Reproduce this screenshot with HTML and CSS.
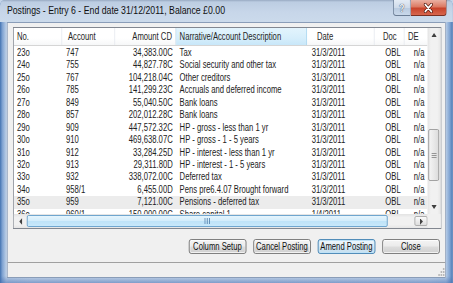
FILE: index.html
```html
<!DOCTYPE html>
<html lang="en">
<head>
<meta charset="utf-8">
<title>Postings</title>
<link rel="stylesheet" href="styles.css">
</head>
<body>
<div class="screen">
<div class="window">
  <div class="titlebar">
    <div class="title">Postings - Entry 6 - End date 31/12/2011, Balance £0.00</div>
    <div class="caption">
      <div class="cap-btn help">?</div>
      <div class="cap-btn close">
        <svg width="16" height="10" viewBox="0 0 16 10"><path d="M4 1.5 L12 8.5 M12 1.5 L4 8.5" stroke="#4a1208" stroke-width="3.6" stroke-linecap="round"/><path d="M4 1.5 L12 8.5 M12 1.5 L4 8.5" stroke="#ffffff" stroke-width="2" stroke-linecap="round"/></svg>
      </div>
    </div>
  </div>
  <div class="client">
    <div class="list">
      <div class="list-top">
        <div class="view">
          <div class="row head">
            <div class="c-no">No.</div>
            <div class="c-acc">Account</div>
            <div class="c-amt">Amount CD</div>
            <div class="c-nar hot">Narrative/Account Description</div>
            <div class="c-date">Date</div>
            <div class="c-doc">Doc</div>
            <div class="c-de">DE</div>
          </div>
          <div class="rows">
            <div class="row"><div class="c-no">23o</div><div class="c-acc">747</div><div class="c-amt">34,383.00C</div><div class="c-nar">Tax</div><div class="c-date">31/3/2011</div><div class="c-doc">OBL</div><div class="c-de">n/a</div></div>
            <div class="row"><div class="c-no">24o</div><div class="c-acc">755</div><div class="c-amt">44,827.78C</div><div class="c-nar">Social security and other tax</div><div class="c-date">31/3/2011</div><div class="c-doc">OBL</div><div class="c-de">n/a</div></div>
            <div class="row"><div class="c-no">25o</div><div class="c-acc">767</div><div class="c-amt">104,218.04C</div><div class="c-nar">Other creditors</div><div class="c-date">31/3/2011</div><div class="c-doc">OBL</div><div class="c-de">n/a</div></div>
            <div class="row"><div class="c-no">26o</div><div class="c-acc">785</div><div class="c-amt">141,299.23C</div><div class="c-nar">Accruals and deferred income</div><div class="c-date">31/3/2011</div><div class="c-doc">OBL</div><div class="c-de">n/a</div></div>
            <div class="row"><div class="c-no">27o</div><div class="c-acc">849</div><div class="c-amt">55,040.50C</div><div class="c-nar">Bank loans</div><div class="c-date">31/3/2011</div><div class="c-doc">OBL</div><div class="c-de">n/a</div></div>
            <div class="row"><div class="c-no">28o</div><div class="c-acc">857</div><div class="c-amt">202,012.28C</div><div class="c-nar">Bank loans</div><div class="c-date">31/3/2011</div><div class="c-doc">OBL</div><div class="c-de">n/a</div></div>
            <div class="row"><div class="c-no">29o</div><div class="c-acc">909</div><div class="c-amt">447,572.32C</div><div class="c-nar">HP - gross - less than 1 yr</div><div class="c-date">31/3/2011</div><div class="c-doc">OBL</div><div class="c-de">n/a</div></div>
            <div class="row"><div class="c-no">30o</div><div class="c-acc">910</div><div class="c-amt">469,638.07C</div><div class="c-nar">HP - gross - 1 - 5 years</div><div class="c-date">31/3/2011</div><div class="c-doc">OBL</div><div class="c-de">n/a</div></div>
            <div class="row"><div class="c-no">31o</div><div class="c-acc">912</div><div class="c-amt">33,284.25D</div><div class="c-nar">HP - interest - less than 1 yr</div><div class="c-date">31/3/2011</div><div class="c-doc">OBL</div><div class="c-de">n/a</div></div>
            <div class="row"><div class="c-no">32o</div><div class="c-acc">913</div><div class="c-amt">29,311.80D</div><div class="c-nar">HP - interest - 1 - 5 years</div><div class="c-date">31/3/2011</div><div class="c-doc">OBL</div><div class="c-de">n/a</div></div>
            <div class="row"><div class="c-no">33o</div><div class="c-acc">932</div><div class="c-amt">338,072.00C</div><div class="c-nar">Deferred tax</div><div class="c-date">31/3/2011</div><div class="c-doc">OBL</div><div class="c-de">n/a</div></div>
            <div class="row"><div class="c-no">34o</div><div class="c-acc">958/1</div><div class="c-amt">6,455.00D</div><div class="c-nar">Pens pre6.4.07 Brought forward</div><div class="c-date">31/3/2011</div><div class="c-doc">OBL</div><div class="c-de">n/a</div></div>
            <div class="row shaded"><div class="c-no">35o</div><div class="c-acc">959</div><div class="c-amt">7,121.00C</div><div class="c-nar">Pensions - deferred tax</div><div class="c-date">31/3/2011</div><div class="c-doc">OBL</div><div class="c-de">n/a</div></div>
            <div class="row"><div class="c-no">36o</div><div class="c-acc">960/1</div><div class="c-amt">150,000.00C</div><div class="c-nar">Share capital 1</div><div class="c-date">1/4/2011</div><div class="c-doc">OBL</div><div class="c-de">n/a</div></div>
          </div>
        </div>
        <div class="vscroll">
          <div class="vbtn"><svg width="7" height="4" viewBox="0 0 7 4"><path d="M0 4 L3.5 0 L7 4 Z" fill="#404040"/></svg></div>
          <div class="vtrack">
            <div class="vthumb"><svg width="7" height="5" viewBox="0 0 7 5"><path d="M0 0.5 H7 M0 2.5 H7 M0 4.5 H7" stroke="#8a8a8a" stroke-width="1"/></svg></div>
          </div>
          <div class="vbtn"><svg width="7" height="4" viewBox="0 0 7 4"><path d="M0 0 L3.5 4 L7 0 Z" fill="#404040"/></svg></div>
        </div>
      </div>
      <div class="hbar">
        <div class="hbtn"><svg width="4" height="7" viewBox="0 0 4 7"><path d="M4 0 L0 3.5 L4 7 Z" fill="#404040"/></svg></div>
        <div class="htrack">
          <div class="hthumb"><svg width="8" height="6" viewBox="0 0 8 6"><path d="M1 0 V6 M4 0 V6 M7 0 V6" stroke="#5a86b0" stroke-width="1.2"/></svg></div>
        </div>
        <div class="hbtn hover"><svg width="4" height="7" viewBox="0 0 4 7"><path d="M0 0 L4 3.5 L0 7 Z" fill="#404040"/></svg></div>
        <div class="corner"></div>
      </div>
    </div>
    <div class="actions">
      <button class="btn">Column Setup</button>
      <button class="btn">Cancel Posting</button>
      <button class="btn default">Amend Posting</button>
      <button class="btn">Close</button>
    </div>
    <div class="status">
      <svg class="grip" width="12" height="10" viewBox="0 0 12 10"><g fill="#b8b8b8"><rect x="9" y="1" width="2" height="2"/><rect x="6" y="4" width="2" height="2"/><rect x="9" y="4" width="2" height="2"/><rect x="3" y="7" width="2" height="2"/><rect x="6" y="7" width="2" height="2"/><rect x="9" y="7" width="2" height="2"/></g></svg>
    </div>
  </div>
</div>
</div>
</body>
</html>
```

FILE: styles.css
```css
* { box-sizing: border-box; }
html, body { margin: 0; padding: 0; overflow: hidden; background: #c4d4e8; }
body { width: 453px; height: 283px; }

.screen {
  width: 453px;
  height: 283px;
  overflow: hidden;
}

/* The dialog is laid out at its natural width and squeezed horizontally,
   matching the narrow proportions of the captured window. */
.window {
  width: 590px;
  height: 283px;
  margin-right: -137px;
  transform: scaleX(0.7676);
  transform-origin: 0 0;
  display: flex;
  flex-direction: column;
  font-family: "Liberation Sans", Arial, sans-serif;
  color: #222;
  border-radius: 6px 6px 0 0;
  background:
    linear-gradient(to bottom, rgba(80,120,180,0) 0, rgba(80,120,180,0) 276px, rgba(70,110,175,.55) 283px),
    linear-gradient(to right, #4373b1 0, #7ea2d1 3px, #b9cde6 8px, #c6d6ea 40px, #c4d5ea 560px, #b5cbe6 581px, #7fa3d2 586px, #4a76b2 590px);
}

.titlebar {
  height: 22px;
  display: flex;
  align-items: flex-start;
  background: linear-gradient(to bottom, #98aac2 0, #bccde2 2px, #c7d6e9 12px, #cbdaeb 22px);
  border-radius: 6px 6px 0 0;
}
.title {
  padding: 3px 0 0 9px;
  font-size: 11.4px;
  line-height: 14px;
  color: #101010;
  white-space: nowrap;
}
.caption {
  display: flex;
  margin-left: auto;
  margin-right: 8px;
}
.cap-btn {
  height: 16px;
  display: flex;
  align-items: center;
  justify-content: center;
}
.help {
  width: 23px;
  border: 1px solid #6b7d95;
  border-top: none;
  border-radius: 0 0 0 4px;
  background: linear-gradient(to bottom, #e4ecf5 0, #cfdbea 50%, #b9cbe0 55%, #c9d8ea 100%);
  color: #f4f7fb;
  font-size: 11px;
  font-weight: bold;
  text-shadow: 0 0 1px #3d4e66, 0 0 1px #3d4e66;
}
.close {
  width: 47px;
  border: 1px solid #7a2f22;
  border-top: none;
  border-left: none;
  border-radius: 0 0 4px 0;
  background: linear-gradient(to bottom, #eab1a3 0, #dc7a63 45%, #c8432b 55%, #d7664e 100%);
}

.client {
  flex: 1;
  margin: 0 9px 5px 9px;
  background: #f0f0f0;
  border: 1px solid #8a9db8;
  display: flex;
  flex-direction: column;
}

.list {
  margin: 4px 5px 0 7px;
  height: 202px;
  border: 1px solid #828790;
  background: #fff;
  display: flex;
  flex-direction: column;
}
.list-top {
  height: 186px;
  display: flex;
}
.view {
  flex: 1;
  overflow: hidden;
  font-size: 10px;
}
.row {
  display: grid;
  grid-template-columns: 63px 69px 79px 171px 88px 39px 40px;
  height: 12.45px;
  line-height: 12.45px;
  white-space: nowrap;
}
.row > div { overflow: hidden; }
.rows { margin-top: 1px; }
.row.shaded { background: #ececec; }

.row.head {
  height: 18px;
  line-height: 17px;
  border-bottom: 1px solid #d5d5d5;
  background: linear-gradient(to bottom, #ffffff 0, #ffffff 60%, #f6f7f8 100%);
  color: #262626;
}
.row.head > div { border-right: 1px solid #e4e8ee; }
.row.head > .hot {
  background: linear-gradient(to bottom, #e3f4fd 0, #d6eefb 60%, #c8e7f9 100%);
  border-right: 1px solid #9fd2ef;
  border-left: 1px solid #c0e3f7;
}

.c-no { padding-left: 4px; }
.c-acc { padding-left: 5px; }
.head .c-acc { padding-left: 7.5px; }
.c-amt { text-align: right; padding-right: 4px; }
.c-nar { padding-left: 5px; }
.head .c-nar { padding-left: 4px; }
.c-date { padding-left: 6px; }
.head .c-date { padding-left: 13px; }
.c-doc { padding-left: 14px; }
.head .c-doc { padding-left: 11px; }
.c-de { padding-left: 12px; }
.head .c-de { padding-left: 4.5px; }

.vscroll {
  width: 17px;
  display: flex;
  flex-direction: column;
  background: linear-gradient(to right, #e3e3e3 0, #f1f1f1 25%, #f1f1f1 75%, #e6e6e6 100%);
}
.vbtn {
  height: 14px;
  display: flex;
  align-items: center;
  justify-content: center;
}
.vtrack {
  flex: 1;
  padding-top: 87px;
}
.vthumb {
  height: 52px;
  width: 14px;
  margin-left: 1px;
  border: 1px solid #979797;
  border-radius: 2px;
  background: linear-gradient(to right, #f4f4f4 0, #e9e9e9 50%, #dcdcdc 100%);
  display: flex;
  align-items: center;
  justify-content: center;
}

.hbar {
  height: 14px;
  display: flex;
  background: linear-gradient(to bottom, #e3e3e3 0, #f1f1f1 25%, #f1f1f1 75%, #e6e6e6 100%);
}
.hbtn {
  width: 17px;
  display: flex;
  align-items: center;
  justify-content: center;
}
.hbtn.hover {
  margin: 2px 0;
  border: 1px solid #a6a6a6;
  border-radius: 2px;
  background: linear-gradient(to bottom, #fbfbfb 0, #ececec 50%, #dedede 100%);
}
.htrack {
  flex: 1;
  padding: 1px 0;
}
.hthumb {
  width: 470px;
  height: 100%;
  border: 1px solid #5e9ccb;
  border-radius: 2px;
  background: linear-gradient(to bottom, #e6f5fd 0, #d4edfb 45%, #bfe3f8 55%, #c8e8fa 100%);
  display: flex;
  align-items: center;
  justify-content: center;
}
.corner {
  width: 17px;
  background: #f0f0f0;
}

.actions {
  display: flex;
  justify-content: flex-end;
  gap: 8.5px;
  margin: 10px 7px 0 0;
  height: 15px;
}
.btn {
  width: 75.5px;
  height: 15px;
  padding: 0;
  font-family: "Liberation Sans", Arial, sans-serif;
  font-size: 10px;
  line-height: 13px;
  color: #111;
  border: 1px solid #707070;
  border-radius: 3px;
  background: linear-gradient(to bottom, #f4f4f4 0, #ebebeb 48%, #dddddd 52%, #d0d0d0 100%);
  box-shadow: inset 0 0 0 1px rgba(255,255,255,.7);
}
.btn.default {
  border-color: #3c7fb1;
  box-shadow: inset 0 0 0 1px #bfe2f7;
  background: linear-gradient(to bottom, #eef6fb 0, #e2eff8 48%, #d2e6f3 52%, #c6dfef 100%);
}

.status {
  margin-top: 8px;
  height: 15px;
  border-top: 1px solid #a0a0a0;
  display: flex;
  justify-content: flex-end;
  align-items: flex-end;
}
.grip { display: block; }
```
